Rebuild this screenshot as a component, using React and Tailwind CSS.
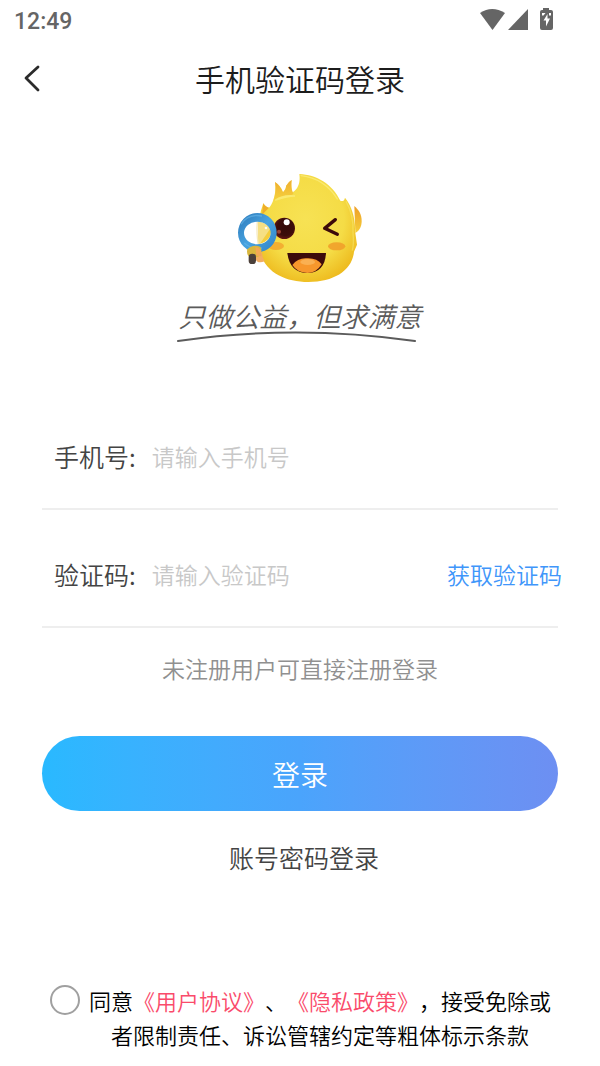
import React, { useState } from "react";

const StatusIcons = () => (
  <svg width="74" height="24" viewBox="0 0 74 24" fill="#656565" aria-hidden="true">
    <path d="M0 5 Q12 -3 25 5 L12.5 22 Z" />
    <path d="M28 22 L48 1 V22 Z" />
    <path
      fillRule="evenodd"
      d="M63 0 H69 V2 H71 Q73 2 73 4 V20 Q73 22 71 22 H62 Q60 22 60 20 V4 Q60 2 62 2 H63 Z M62 5 V7.500 H63.500 L65.500 5 Z M69 5 H71 V7.500 H69 Z M67.500 6 L63.500 12.500 H66 V18.500 L70 10.500 H67.500 Z"
    />
  </svg>
);

const Mascot = () => (
  <svg width="150" height="130" viewBox="0 0 450 390" aria-hidden="true">
    <defs>
      <radialGradient id="face" cx="48%" cy="42%" r="60%">
        <stop offset="0" stopColor="#f7e254" />
        <stop offset="0.65" stopColor="#f5dc46" />
        <stop offset="1" stopColor="#eebc20" />
      </radialGradient>
      <linearGradient id="flame" x1="0" y1="0" x2="0" y2="1">
        <stop offset="0" stopColor="#ee9e28" />
        <stop offset="1" stopColor="#f5cf3a" />
      </linearGradient>
      <radialGradient id="eye" cx="55%" cy="45%" r="55%">
        <stop offset="0" stopColor="#350908" />
        <stop offset="0.7" stopColor="#3c0c0a" />
        <stop offset="1" stopColor="#621611" />
      </radialGradient>
      <linearGradient id="ring" x1="0" y1="0" x2="1" y2="1">
        <stop offset="0" stopColor="#2b77b8" />
        <stop offset="0.5" stopColor="#48a3e0" />
        <stop offset="1" stopColor="#2f82c6" />
      </linearGradient>
    </defs>
    <path d="M388 126 C402 138 410 152 410 171 C410 188 403 200 391 207 Z" fill="url(#flame)" />
    <path
      d="M223 30 C274 32 322 60 346 110 Q357 115 360 101 C381 128 391 163 390 200 L396 242 L387 263 C382 318 328 354 250 354 C183 354 123 327 105 266 C94 222 98 163 115 118 Q122 130 132 131 C145 119 155 82 150 54 Q167 65 174 85 Q184 75 183 66 Q190 53 200 48 Q197 69 203 85 C222 73 226 50 223 30 Z"
      fill="url(#face)"
    />
    <path d="M150 54 Q167 65 174 85 Q184 75 183 66 Q190 53 200 48 Q197 69 203 85 Q210 91 195 94 Q166 95 145 110 Q155 84 150 54 Z" fill="url(#flame)" opacity="0.75" />
    <path d="M115 118 Q122 130 132 131 Q119 143 111 154 Z" fill="#efae29" />
    <path d="M152 108 Q174 91 210 96 Q193 95 152 108 M228 35 Q298 43 337 105" fill="none" stroke="#fdf18b" strokeWidth="4" strokeLinecap="round" opacity="0.6" />
    <path d="M363 112 Q387 154 384 206 Q387 241 382 260" fill="none" stroke="#faec72" strokeWidth="4" opacity="0.5" />
    <ellipse cx="153" cy="246" rx="24" ry="12" fill="#f2a42c" opacity="0.8" />
    <ellipse cx="335" cy="247" rx="26" ry="12" fill="#f1a02a" opacity="0.9" />
    <circle cx="178" cy="193" r="32" fill="url(#eye)" />
    <circle cx="185" cy="175" r="9" fill="#fff" />
    <circle cx="162" cy="203" r="6" fill="#9b4436" />
    <path d="M331 167 L299 193 L337 211" fill="none" stroke="#3c0a0a" strokeWidth="10" strokeLinecap="round" strokeLinejoin="round" />
    <path d="M187 267 H303 Q300 326 247 327 Q194 326 187 267 Z" fill="#3c0b0b" />
    <path d="M202 303 Q218 282 244 283 Q276 281 290 301 Q274 327 247 327 Q217 326 202 303 Z" fill="#f7972c" />
    <ellipse cx="248" cy="294" rx="22" ry="9" fill="#fab052" />
    <path d="M93 262 Q112 255 113 280 L119 292 Q97 301 91 284 Z" fill="#f2ad63" />
    <ellipse cx="97" cy="207" rx="41" ry="35" fill="#fff" />
    <path d="M99 172 Q136 179 138 205 Q132 231 99 242 Z" fill="#f5df84" />
    <path d="M137 192 L105 239 Q138 231 138 201 Z" fill="#f4cd3c" />
    <path d="M97 172 Q94 210 100 242" stroke="#f5e9bd" strokeWidth="4" fill="none" />
    <circle cx="123" cy="192" r="4" fill="#fffbed" />
    <path
      fillRule="evenodd"
      d="M39 206 A58 59 0 1 1 155 206 A58 59 0 1 1 39 206 Z M57 207 A40 34 0 1 0 137 207 A40 34 0 1 0 57 207 Z"
      fill="url(#ring)"
    />
    <path d="M48 181 Q69 148 111 156 M58 237 Q79 256 111 252" fill="none" stroke="#67b7e9" strokeWidth="4" opacity="0.6" />
    <path d="M67 256 Q82 240 106 248 Q115 264 100 278 L76 283 Q63 272 67 256 Z" fill="#d9b73e" />
    <path d="M91 249 Q112 250 109 277 L94 275 Z" fill="#f2a855" />
    <rect x="71" y="269" width="22" height="31" rx="10" fill="#4b403a" />
  </svg>
);

const App = () => {
  const [phone, setPhone] = useState("");
  const [code, setCode] = useState("");
  const [agreed, setAgreed] = useState(false);

  const handleSubmit = (e) => {
    e.preventDefault();
  };

  return (
    <div className="min-h-screen bg-white font-['Roboto','Noto_Sans_CJK_SC',sans-serif]">
      <div className="flex h-10 items-center justify-between pl-[14px] pr-[46px] text-[#656565]">
        <span className="pt-1 text-[23px] font-medium leading-9">12:49</span>
        <StatusIcons />
      </div>

      <header className="grid h-[76px] grid-cols-[60px_1fr_60px] items-center">
        <button type="button" aria-label="返回" className="flex h-full items-center pl-6">
          <svg width="16" height="28" viewBox="0 0 16 28" fill="none" stroke="#2b2b2b" strokeWidth="2.800" strokeLinecap="round" strokeLinejoin="round">
            <path d="M14 3 L2 14 L14 26" />
          </svg>
        </button>
        <h1 className="text-center font-['Noto_Sans_CJK_SC',sans-serif] text-[30px] font-[350] leading-10 text-[#1c1c1c]">
          手机验证码登录
        </h1>
      </header>

      <main className="px-[42px] pt-12 font-['Noto_Sans_CJK_SC',sans-serif] font-[350]">
        <div className="flex flex-col items-center">
          <Mascot />
          <p className="pt-2 text-[27px] italic leading-7 text-[#5b5b5b]">只做公益，但求满意</p>
          <svg width="246" height="12" viewBox="0 0 246 12" fill="none" aria-hidden="true">
            <path d="M1 11 Q118 -6 238 11" stroke="#5b5b5b" strokeWidth="2" strokeLinecap="round" />
          </svg>
        </div>

        <form onSubmit={handleSubmit} className="flex flex-col pt-[50px]">
          <div className="flex items-center gap-4 border-b-2 border-[#eee] pb-[34px] pl-3 pt-[46px]">
            <label htmlFor="phone" className="text-[25px] leading-9 text-[#444]">手机号:</label>
            <input
              id="phone"
              type="tel"
              value={phone}
              onChange={(e) => setPhone(e.target.value)}
              placeholder="请输入手机号"
              className="h-9 min-w-0 flex-1 text-[23px] leading-9 outline-none placeholder:text-[#c8c8c8]"
            />
          </div>
          <div className="flex items-center gap-4 border-b-2 border-[#eee] pb-[34px] pl-3 pt-[46px]">
            <label htmlFor="code" className="text-[25px] leading-9 text-[#444]">验证码:</label>
            <input
              id="code"
              type="text"
              value={code}
              onChange={(e) => setCode(e.target.value)}
              placeholder="请输入验证码"
              className="h-9 min-w-0 flex-1 text-[23px] leading-9 outline-none placeholder:text-[#c8c8c8]"
            />
            <button type="button" className="-mr-1 text-[23px] leading-9 text-[#4096fa]">获取验证码</button>
          </div>

          <p className="mt-[22px] text-center text-[23px] leading-9 text-[#909090]">未注册用户可直接注册登录</p>

          <button
            type="submit"
            className="mt-[50px] h-[75px] rounded-full bg-linear-to-r from-[#29b9ff] via-[#4aa4fc] to-[#6d8ff2] text-[28px] text-white"
          >
            登录
          </button>

          <a href="#password" className="mt-7 self-center pl-2 text-[25px] leading-9 text-[#444]">
            账号密码登录
          </a>

          <div className="mt-27 flex items-start gap-[2px] pl-2">
            <input
              id="agree"
              type="checkbox"
              checked={agreed}
              onChange={(e) => setAgreed(e.target.checked)}
              className="mt-[2px] size-[30px] shrink-0 appearance-none rounded-full border-2 border-[#a0a0a0] checked:bg-[#4a9bfa]"
            />
            <label htmlFor="agree" className="flex-1 text-center text-[22px] leading-[34px] text-black [text-spacing-trim:space-all]">
              同意<a href="#terms" className="text-[#fa4b6b]">《用户协议》</a>、<a href="#privacy" className="text-[#fa4b6b]">《隐私政策》</a>，接受免除或者限制责任、诉讼管辖约定等粗体标示条款
            </label>
          </div>
        </form>
      </main>
    </div>
  );
};

export default App;
